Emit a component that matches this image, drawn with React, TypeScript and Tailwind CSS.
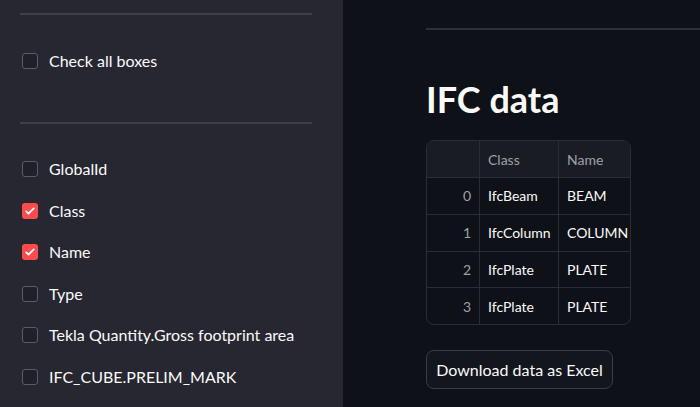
import React from "react";

const font = { fontFamily: "Lato, 'Noto Sans', sans-serif" };

function Box({ checked }: { checked?: boolean }) {
  if (checked) {
    return (
      <span className="flex h-4 w-4 items-center justify-center rounded-[3px] bg-[#ff4b4b]">
        <svg viewBox="0 0 16 16" className="h-3 w-3" fill="none">
          <path d="M3 8.5l3 3 7-7" stroke="white" strokeWidth="2.4" strokeLinecap="round" strokeLinejoin="round" />
        </svg>
      </span>
    );
  }
  return <span className="h-4 w-4 rounded-[3px] border border-[#5b5d66] bg-[#1f2029]" />;
}

function Check({ label, checked }: { label: string; checked?: boolean }) {
  return (
    <div className="flex h-[41.5px] items-center gap-[11px] pl-[2px]">
      <Box checked={checked} />
      <span className="text-[16px] text-[#fafafa]">{label}</span>
    </div>
  );
}

const rows = [
  ["0", "IfcBeam", "BEAM"],
  ["1", "IfcColumn", "COLUMN"],
  ["2", "IfcPlate", "PLATE"],
  ["3", "IfcPlate", "PLATE"],
];

export default function App() {
  return (
    <div className="flex h-[407px] w-[700px] overflow-hidden bg-[#0e1117]" style={font}>
      {/* Sidebar */}
      <div className="w-[343px] shrink-0 bg-[#262730] pl-5 pr-[31px]">
        <div className="mt-[13px] h-[2px] bg-[#3e3f48]" />
        <div className="mt-[25px]">
          <Check label="Check all boxes" />
        </div>
        <div className="mt-[40px] h-[2px] bg-[#3e3f48]" />
        <div className="mt-[25px] flex flex-col">
          <Check label="GlobalId" />
          <Check label="Class" checked />
          <Check label="Name" checked />
          <Check label="Type" />
          <Check label="Tekla Quantity.Gross footprint area" />
          <Check label="IFC_CUBE.PRELIM_MARK" />
        </div>
      </div>

      {/* Main */}
      <div className="flex-1 pl-[83px]">
        <div className="mt-[28px] h-[2px] bg-[#2e3038]" />
        <h1 className="mt-[47px] text-[36px] font-bold leading-[44px] text-[#fafafa]">IFC data</h1>
        <div className="mt-[19px] w-[205px] overflow-hidden rounded-lg border border-[#2b2d35] text-[14px]">
          <div className="flex h-[36px] items-center bg-[#1a1c23] text-[#9fa1a8]">
            <div className="h-full w-[53px] shrink-0 border-r border-[#2b2d35]" />
            <div className="flex h-full w-[79px] shrink-0 items-center border-r border-[#2b2d35] px-2">Class</div>
            <div className="flex h-full flex-1 items-center px-2">Name</div>
          </div>
          {rows.map((r) => (
            <div key={r[0]} className="flex h-[36.75px] items-center border-t border-[#2b2d35] text-[#fafafa]">
              <div className="flex h-full w-[53px] shrink-0 items-center justify-end border-r border-[#2b2d35] px-2 text-[#9fa1a8]">{r[0]}</div>
              <div className="flex h-full w-[79px] shrink-0 items-center whitespace-nowrap border-r border-[#2b2d35] px-2">{r[1]}</div>
              <div className="flex h-full flex-1 items-center whitespace-nowrap px-2">{r[2]}</div>
            </div>
          ))}
        </div>
        <button className="mt-[25px] h-[39px] w-[187px] rounded-lg border border-[#3b3d46] bg-[#13161d] text-[16px] text-[#fafafa]">
          Download data as Excel
        </button>
      </div>
    </div>
  );
}
